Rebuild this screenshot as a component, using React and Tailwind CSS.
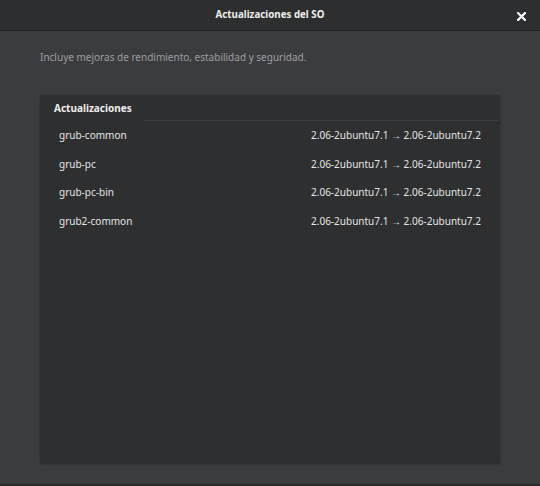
const packages = [
  { name: "grub-common", from: "2.06-2ubuntu7.1", to: "2.06-2ubuntu7.2" },
  { name: "grub-pc", from: "2.06-2ubuntu7.1", to: "2.06-2ubuntu7.2" },
  { name: "grub-pc-bin", from: "2.06-2ubuntu7.1", to: "2.06-2ubuntu7.2" },
  { name: "grub2-common", from: "2.06-2ubuntu7.1", to: "2.06-2ubuntu7.2" },
];

export default function App() {
  return (
    <div
      className="w-[540px] h-[486px] flex flex-col bg-[#3b3c3f] border-b-2 border-[#2a2b2d] overflow-hidden"
      style={{ fontFamily: "'Noto Sans', sans-serif" }}
    >
      {/* Title bar */}
      <div className="h-[31px] shrink-0 flex items-center justify-center relative bg-[#2d2e30] border-b border-[#222325]">
        <span className="text-[9.75px] font-bold text-[#eeeeec]">Actualizaciones del SO</span>
        <button className="absolute right-[12px] top-[9px] w-[14px] h-[14px] flex items-center justify-center">
          <svg width="9" height="9" viewBox="0 0 9 9">
            <path d="M1 1 L8 8 M8 1 L1 8" stroke="#ffffff" strokeWidth="2.2" strokeLinecap="square" />
          </svg>
        </button>
      </div>

      {/* Content */}
      <div className="flex-1 flex flex-col px-[40px] pt-[18px] pb-[21px]">
        <p className="text-[10px] text-[#9d9e9f] leading-[16px]">
          Incluye mejoras de rendimiento, estabilidad y seguridad.
        </p>

        <div className="mt-[30px] flex-1 bg-[#2e2f31] shadow-[0_1px_2px_rgba(0,0,0,0.35)] flex flex-col">
          <div className="h-[22px] flex items-end pl-[14px]">
            <span className="text-[10px] font-bold text-[#eeeeec] leading-[18px]">Actualizaciones</span>
          </div>
          <div className="mt-[3px] ml-[104px] mr-[2px] h-px bg-[#3f4043]"></div>
          <div className="flex flex-col">
            {packages.map((p) => (
              <div
                key={p.name}
                className="h-[28.7px] flex items-center justify-between pl-[19px] pr-[19px] text-[10px] text-[#e6e6e4]"
              >
                <span>{p.name}</span>
                <span>
                  {p.from} → {p.to}
                </span>
              </div>
            ))}
          </div>
        </div>
      </div>
    </div>
  );
}
